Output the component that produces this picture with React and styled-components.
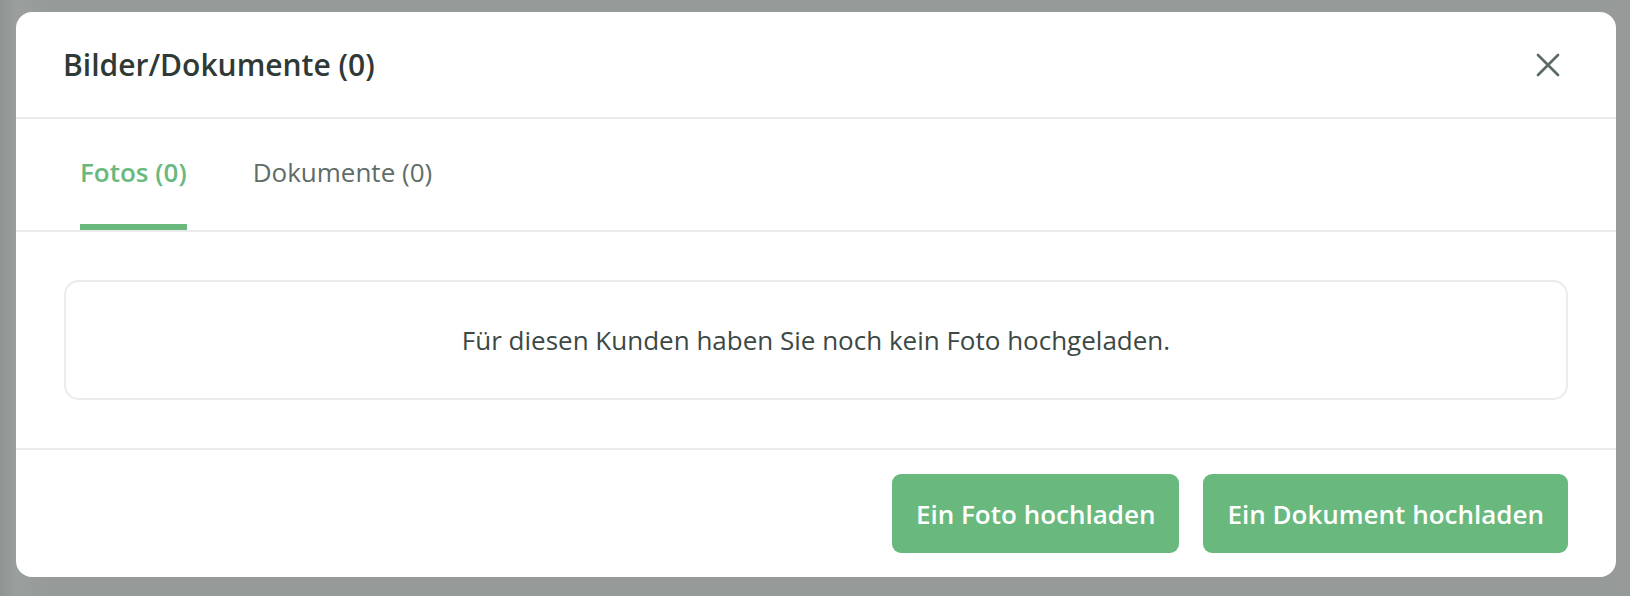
import React, { useState } from "react";
import styled, { createGlobalStyle } from "styled-components";

const GlobalStyle = createGlobalStyle`
  html, body {
    margin: 0;
    padding: 0;
    background: #969a98;
  }
  body {
    font-family: "Open Sans", "Noto Sans", sans-serif;
    -webkit-font-smoothing: antialiased;
  }
`;

const Backdrop = styled.div`
  width: 1630px;
  height: 596px;
  box-sizing: border-box;
  padding: 12px 14px 0 16px;
  background: linear-gradient(90deg, #8f9391 0%, #9a9e9c 1%, #969a98 3%, #969a98 100%);
  overflow: hidden;
`;

const Modal = styled.div`
  width: 1600px;
  background: #ffffff;
  border-radius: 16px;
  display: flex;
  flex-direction: column;
  overflow: hidden;
`;

const Header = styled.div`
  height: 107px;
  box-sizing: border-box;
  padding: 0 56px 0 47px;
  display: flex;
  align-items: center;
  justify-content: space-between;
  border-bottom: 2px solid #ebebeb;
`;

const Title = styled.h2`
  margin: 0;
  font-size: 30px;
  line-height: 40px;
  font-weight: 600;
  color: #2f3a36;
`;

const CloseButton = styled.button`
  border: 0;
  background: transparent;
  padding: 0;
  width: 24px;
  height: 24px;
  display: flex;
  cursor: pointer;
  color: #5c6b66;
`;

const TabBar = styled.div`
  display: flex;
  gap: 66px;
  padding: 0 64px;
  border-bottom: 2px solid #ebebeb;
`;

const Tab = styled.button`
  border: 0;
  background: transparent;
  padding: 35px 0 34px;
  margin: 0;
  font-family: inherit;
  font-size: 26px;
  line-height: 36px;
  font-weight: ${(p) => (p.$active ? 600 : 400)};
  color: ${(p) => (p.$active ? "#69b97e" : "#5f6d69")};
  border-bottom: 6px solid ${(p) => (p.$active ? "#69b97e" : "transparent")};
  cursor: pointer;
`;

const Body = styled.div`
  padding: 48px 48px 48px;
  border-bottom: 2px solid #ebebeb;
`;

const EmptyCard = styled.div`
  height: 120px;
  box-sizing: border-box;
  border: 2px solid #ebebeb;
  border-radius: 15px;
  display: flex;
  align-items: center;
  justify-content: center;
  font-size: 26px;
  color: #3c4844;
`;

const Footer = styled.div`
  display: flex;
  justify-content: flex-end;
  gap: 24px;
  padding: 24px 48px 24px;
`;

const PrimaryButton = styled.button`
  height: 79px;
  padding: 0 24px;
  border: 0;
  border-radius: 9px;
  background: #69b97e;
  color: #ffffff;
  font-family: inherit;
  font-size: 26px;
  font-weight: 600;
  cursor: pointer;
`;

const CloseIcon = () => (
  <svg width="24" height="24" viewBox="0 0 24 24" fill="none">
    <path
      d="M2 2 L22 22 M22 2 L2 22"
      stroke="currentColor"
      strokeWidth="2.7"
      strokeLinecap="round"
    />
  </svg>
);

export default function App() {
  const [tab, setTab] = useState("fotos");
  return (
    <>
      <GlobalStyle />
      <Backdrop>
        <Modal>
          <Header>
            <Title>Bilder/Dokumente (0)</Title>
            <CloseButton aria-label="Schließen">
              <CloseIcon />
            </CloseButton>
          </Header>
          <TabBar>
            <Tab $active={tab === "fotos"} onClick={() => setTab("fotos")}>
              Fotos (0)
            </Tab>
            <Tab $active={tab === "docs"} onClick={() => setTab("docs")}>
              Dokumente (0)
            </Tab>
          </TabBar>
          <Body>
            <EmptyCard>
              {tab === "fotos"
                ? "Für diesen Kunden haben Sie noch kein Foto hochgeladen."
                : "Für diesen Kunden haben Sie noch kein Dokument hochgeladen."}
            </EmptyCard>
          </Body>
          <Footer>
            <PrimaryButton>Ein Foto hochladen</PrimaryButton>
            <PrimaryButton>Ein Dokument hochladen</PrimaryButton>
          </Footer>
        </Modal>
      </Backdrop>
    </>
  );
}
